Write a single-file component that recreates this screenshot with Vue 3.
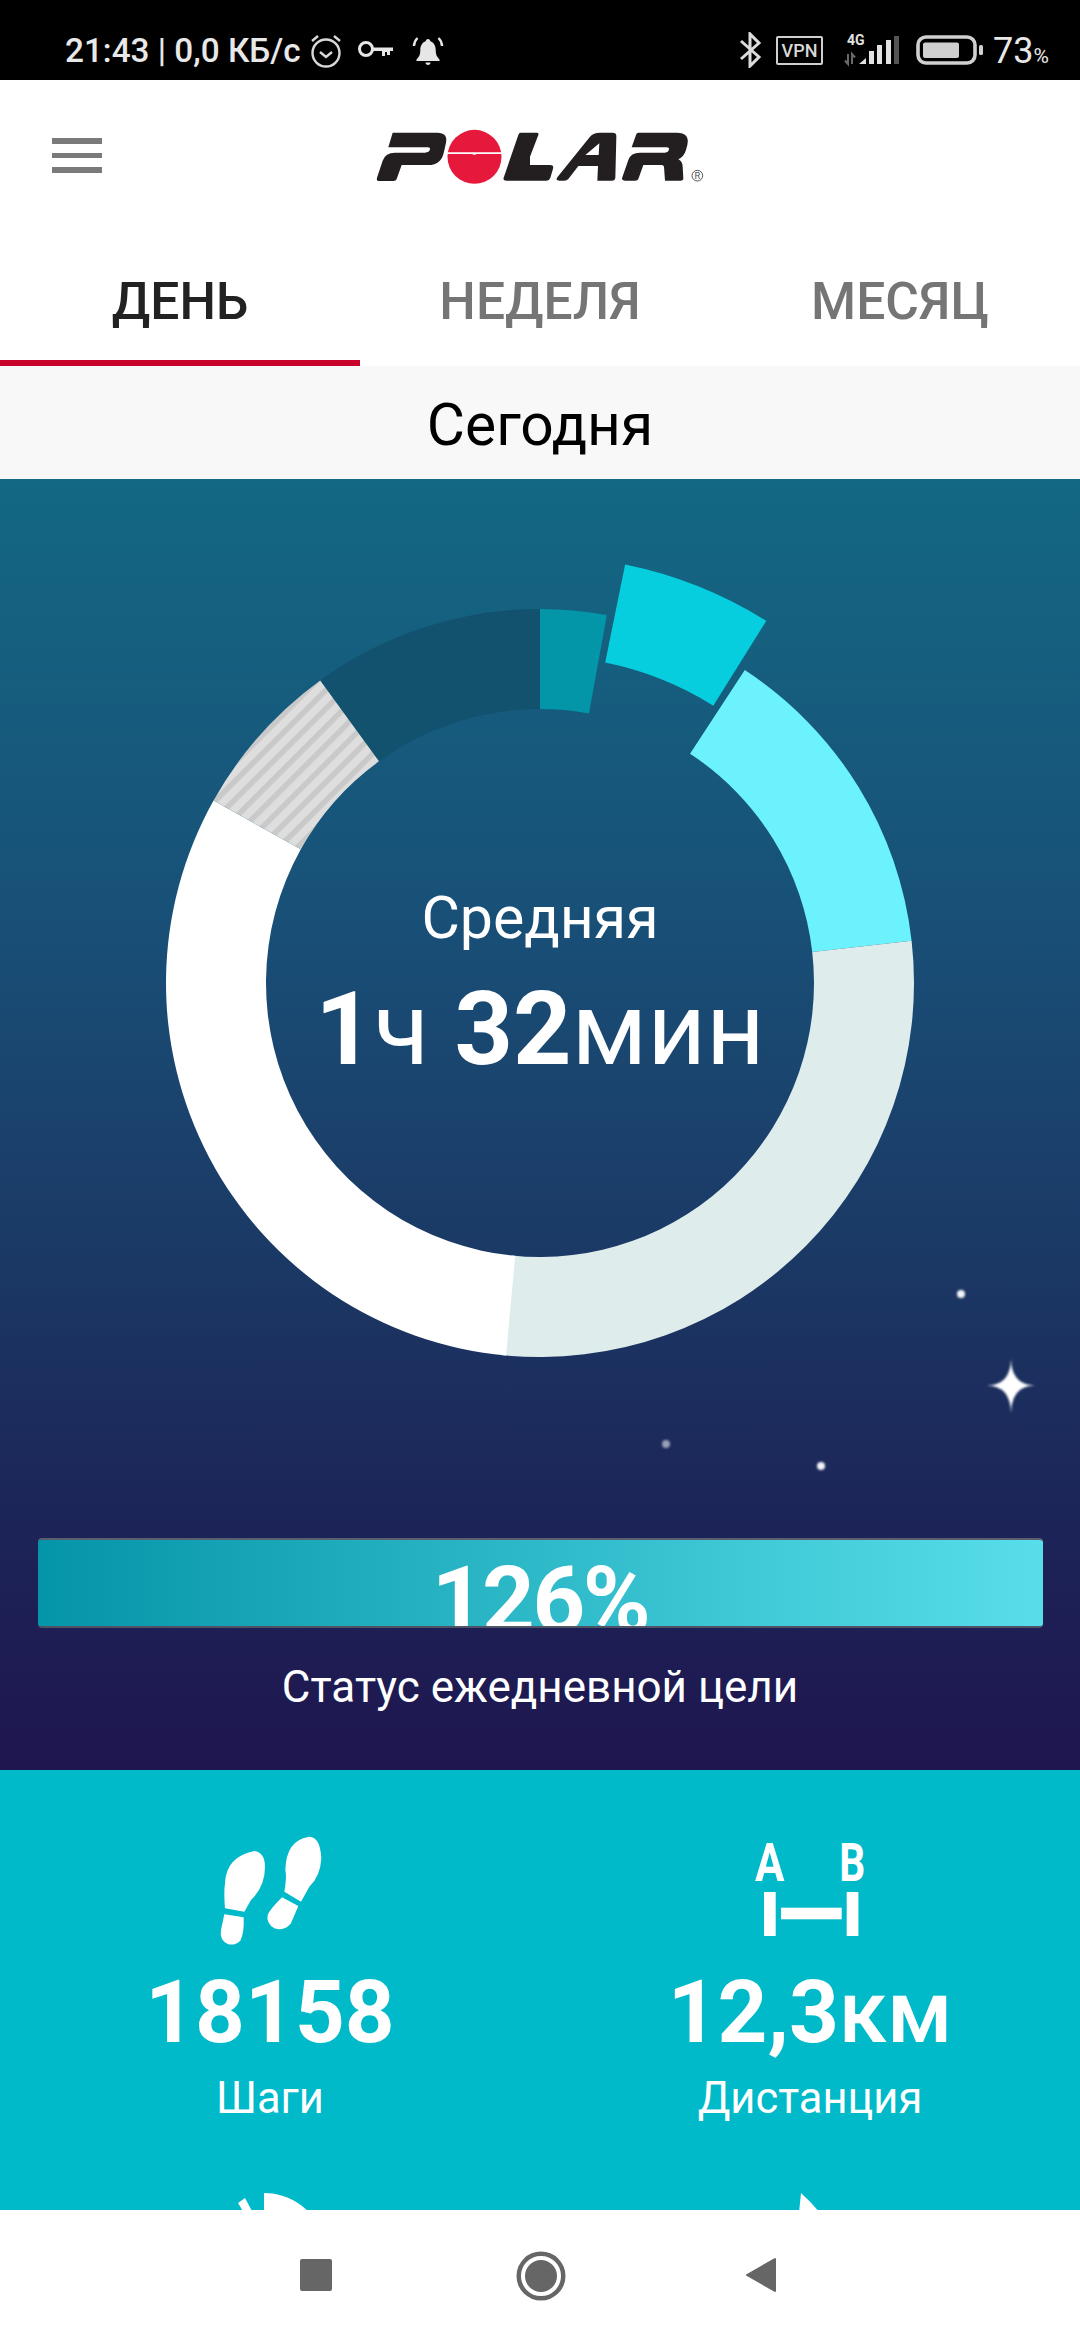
<script setup>
const cx = 540
const cy = 504

function pt(r, a) {
  const t = (a * Math.PI) / 180
  return `${(cx + r * Math.sin(t)).toFixed(2)},${(cy - r * Math.cos(t)).toFixed(2)}`
}
function arc(ri, ro, a0, a1) {
  const large = a1 - a0 > 180 ? 1 : 0
  return `M${pt(ro, a0)} A${ro},${ro} 0 ${large} 1 ${pt(ro, a1)} L${pt(ri, a1)} A${ri},${ri} 0 ${large} 0 ${pt(ri, a0)} Z`
}

const segments = [
  { d: arc(274, 374, -36, 0), fill: '#12526f' },
  { d: arc(274, 374, 0, 10.3), fill: '#0395a8' },
  { d: arc(327, 427, 11.5, 32), fill: '#06cede' },
  { d: arc(274, 374, 33.2, 83.5), fill: '#6cf2fd' },
  { d: arc(274, 374, 83.5, 186), fill: '#deecec' },
  { d: arc(274, 374, 185.2, 299.2), fill: '#ffffff' },
  { d: arc(274, 374, 299.2, 324), fill: 'url(#hatch)' }
]
const dots = [
  { x: 961, y: 815, o: 0.95 },
  { x: 666, y: 965, o: 0.55 },
  { x: 821, y: 987, o: 0.95 }
]
</script>

<template>
  <div class="phone">
    <div class="status">
      <span class="clock-text">21:43 | 0,0 КБ/с</span>
      <svg class="st-clock" width="32" height="36" viewBox="0 0 32 36">
        <circle cx="16" cy="20" r="13.5" fill="none" stroke="#d8d8d8" stroke-width="2.4" />
        <path d="M10 19l6 5 6-5" fill="none" stroke="#d8d8d8" stroke-width="2.4" />
        <path d="M2 8l6-5M30 8l-6-5" fill="none" stroke="#d8d8d8" stroke-width="2.4" />
      </svg>
      <svg class="st-key" width="38" height="20" viewBox="0 0 38 20">
        <circle cx="9" cy="9" r="6.5" fill="none" stroke="#e6e6e6" stroke-width="3" />
        <path d="M15 7.5h21v3.5h-3v4h-3v-3h-2v4h-3v-5H15z" fill="#e6e6e6" />
      </svg>
      <svg class="st-bell" width="32" height="32" viewBox="0 0 32 32">
        <path d="M16 4c1.5 0 2.2 1 2.3 2.2C22 7.500 23.700 11 23.700 15c0 4 .8 6.500 3.800 9.500v1.500h-23v-1.500c3-3 3.800-5.500 3.800-9.500 0-4 1.700-7.500 5.400-8.800C13.800 5 14.500 4 16 4z" fill="#e6e6e6" />
        <path d="M13.500 27.500h5c0 1.500-1 2.500-2.500 2.500s-2.500-1-2.500-2.500z" fill="#e6e6e6" />
        <path d="M2 11c0-3 1.500-6 3.500-8M30 11c0-3-1.500-6-3.500-8" fill="none" stroke="#e6e6e6" stroke-width="2.400" />
      </svg>
      <div class="st-spacer"></div>
      <svg class="st-bt" width="24" height="36" viewBox="0 0 24 36">
        <path d="M3 9l18 16-9 9V2l9 9L3 27" fill="none" stroke="#dcdcdc" stroke-width="3" />
      </svg>
      <div class="st-vpn">VPN</div>
      <svg class="st-signal" width="58" height="34" viewBox="0 0 58 34">
        <text x="5" y="12" class="st-4g">4G</text>
        <path d="M6 21v10l-3-3.500M10 31V21l3 3.500" fill="none" stroke="#6a6a6a" stroke-width="2" />
        <path d="M17 31l7-6v6z" fill="#e2e2e2" />
        <rect x="27" y="18" width="5" height="13" fill="#e2e2e2" />
        <rect x="35" y="12" width="5" height="19" fill="#e2e2e2" />
        <rect x="44" y="7" width="5" height="24" fill="#e2e2e2" />
        <rect x="52" y="3" width="5" height="28" fill="#555" />
      </svg>
      <svg class="st-batt" width="68" height="30" viewBox="0 0 68 30">
        <rect x="2" y="2" width="57" height="26" rx="8" fill="none" stroke="#d0d0d0" stroke-width="3.600" />
        <rect x="7" y="7.500" width="36" height="15.500" rx="2" fill="#cfcfcf" />
        <rect x="63" y="10" width="4" height="10" rx="1.500" fill="#d0d0d0" />
      </svg>
      <span class="st-pct">73<small>%</small></span>
    </div>

    <header class="header">
      <div class="burger"><i></i><i></i><i></i></div>
      <svg class="logo" width="360" height="90" viewBox="0 0 1080 270">
        <g fill="#231f20">
          <path d="M98,68 H232 Q264,68 258,98 L252,125 Q244,165 205,165 H125 L110,207 Q108,213 100,213 H58 Q48,213 51,203 L68,152 Q76,128 105,128 H195 Q208,128 210,118 Q211,112 203,112 H85 Z" />
          <path d="M482,68 H530 Q537,68 535,75 L510,140 V165 H570 Q582,165 579,176 L571,203 Q568,212 558,212 H440 Q428,212 431,203 L475,75 Q477,68 482,68 Z" />
          <path fill-rule="evenodd" d="M720,68 H758 Q770,68 769,80 L766,203 Q765,212 756,212 H712 L714,168 H655 L625,207 Q621,212 612,212 H598 Q585,212 592,202 L690,80 Q700,68 720,68 Z M676,135 H716 L718,100 Z" />
          <path d="M835,68 H950 Q990,68 982,105 L978,120 Q972,140 955,148 Q968,155 968,170 L970,205 Q970,212 962,212 H915 L912,170 Q911,165 905,165 H850 L835,207 Q833,212 825,212 H795 Q783,212 787,202 L805,150 Q812,128 840,128 H915 Q925,128 927,118 Q928,112 920,112 H815 L828,75 Q830,68 835,68 Z" />
        </g>
        <circle cx="343.500" cy="140.500" r="81" fill="#e6193c" />
        <path d="M258,127 H428 V132 H350 L343,135 L336,132 H258 Z" fill="#fff" />
        <circle cx="1012" cy="197" r="16" fill="none" stroke="#555" stroke-width="3" />
        <text x="1012" y="207" text-anchor="middle" class="reg">R</text>
      </svg>
    </header>

    <nav class="tabs">
      <div class="tab active">ДЕНЬ</div>
      <div class="tab">НЕДЕЛЯ</div>
      <div class="tab">МЕСЯЦ</div>
    </nav>

    <div class="today">Сегодня</div>

    <main class="main">
      <section class="hero">
        <div class="donut">
          <svg width="1080" height="1031" viewBox="0 0 1080 1031">
            <defs>
              <pattern id="hatch" width="13" height="13" patternUnits="userSpaceOnUse" patternTransform="rotate(45)">
                <rect width="13" height="13" fill="#dedede" />
                <rect width="5.500" height="13" fill="#c9c9c9" />
              </pattern>
              <filter id="soft" x="-30%" y="-30%" width="160%" height="160%">
                <feGaussianBlur stdDeviation="0.8" />
              </filter>
            </defs>
            <path v-for="(s, i) in segments" :key="i" :d="s.d" :fill="s.fill" />
            <circle v-for="(d, i) in dots" :key="'d' + i" :cx="d.x" :cy="d.y" r="4" fill="#fff" :opacity="d.o" filter="url(#soft)" />
            <path d="M1011,880 Q1011.500,906 1035,906.500 Q1011.500,907 1011,934 Q1010.500,907 987,906.500 Q1010.500,906 1011,880 Z" fill="#fff" filter="url(#soft)" />
          </svg>
          <div class="center">
            <div class="center-label">Средняя</div>
            <div class="center-value"><b>1</b>ч <b>32</b>мин</div>
          </div>
        </div>
        <div class="bar"><span>126%</span></div>
        <div class="bar-label">Статус ежедневной цели</div>
      </section>

      <section class="stats">
        <div class="stat">
          <svg class="foot" width="130" height="130" viewBox="0 0 390 390">
            <g fill="#fff">
              <path d="M160,93 Q192,98 192,140 Q192,200 150,240 L130,275 L72,265 Q68,220 72,190 Q75,110 160,93 Z" />
              <path d="M70,283 L128,292 Q130,340 118,362 Q100,378 80,372 Q55,360 60,330 Z" />
              <path d="M325,50 Q358,52 361,115 Q358,170 325,200 L300,245 L250,215 Q258,170 253,150 Q255,60 325,50 Z" />
              <path d="M243,232 L292,258 L270,310 Q250,335 220,325 Q195,310 200,285 Q205,270 243,232 Z" />
            </g>
          </svg>
          <div class="stat-value"><b>18158</b></div>
          <div class="stat-label">Шаги</div>
        </div>
        <div class="stat">
          <svg width="130" height="130" viewBox="0 0 130 130">
            <text class="ab" x="10" y="60.700" textLength="29.500" lengthAdjust="spacingAndGlyphs">A</text>
            <text class="ab" x="94.300" y="60.700" textLength="26" lengthAdjust="spacingAndGlyphs">B</text>
            <g fill="#fff">
              <rect x="19" y="72" width="11.700" height="44" />
              <rect x="101.700" y="72" width="11.700" height="44" />
              <rect x="36" y="87.700" width="60.700" height="11.600" />
            </g>
          </svg>
          <div class="stat-value"><b>12,3</b><span>км</span></div>
          <div class="stat-label">Дистанция</div>
        </div>
        <div class="stat stat-next">
          <svg width="80" height="20" viewBox="0 0 80 20">
            <path d="M8,10 L15,5 L23,20 H14 Z" fill="#fff" />
            <path d="M34,0 Q60,0 80,20 H34 Z" fill="#fff" />
          </svg>
        </div>
        <div class="stat stat-next">
          <svg width="24" height="20" viewBox="0 0 24 20">
            <path d="M3,0 Q14,10 22,20 H1 Q2,10 3,0 Z" fill="#fff" />
          </svg>
        </div>
      </section>
    </main>

    <footer class="nav">
      <div class="nav-square"></div>
      <div class="nav-circle"></div>
      <svg width="32" height="38" viewBox="0 0 32 38" class="nav-back">
        <path d="M30 3v32l-28-16z" fill="#666" stroke="#666" stroke-width="2" stroke-linejoin="round" />
      </svg>
    </footer>
  </div>
</template>

<style scoped>
.phone {
  width: 1080px;
  height: 2340px;
  display: flex;
  flex-direction: column;
  overflow: hidden;
  background: #fff;
  font-family: Roboto, "Noto Sans", sans-serif;
}
.status {
  height: 80px;
  flex: none;
  background: #000;
  display: flex;
  align-items: center;
  padding: 20px 39px 0 65px;
  box-sizing: border-box;
  color: #e8e8e8;
}
.clock-text {
  font-size: 33.300px;
  font-weight: 500;
  white-space: nowrap;
  width: 245px;
}
.st-clock { margin-top: 2px; }
.st-key { margin-left: 15px; }
.st-bell { margin-left: 17px; margin-top: 2px; }
.st-spacer { flex: 1; }
.st-bt { margin-right: 14px; }
.st-vpn {
  width: 47px;
  height: 29px;
  box-sizing: border-box;
  border: 2px solid #cfcfcf;
  border-radius: 2px;
  font-size: 18px;
  font-weight: 500;
  line-height: 25px;
  text-align: center;
  color: #d8d8d8;
  margin-right: 19px;
}
.st-signal { margin-right: 16px; }
.st-4g { font-size: 14px; font-weight: 700; fill: #e2e2e2; font-family: Roboto, sans-serif; }
.st-pct { font-size: 36px; margin-left: 9px; width: 48px; white-space: nowrap; margin-top: 2px; }
.st-pct small { font-size: 21px; }

.header {
  height: 155px;
  flex: none;
  display: flex;
  align-items: flex-start;
}
.burger {
  width: 50px;
  margin: 58px 0 0 52px;
  display: flex;
  flex-direction: column;
  gap: 9px;
}
.burger i {
  display: block;
  height: 5.500px;
  background: #7a7a7a;
}
.logo { margin: 30px 0 0 258px; }
.reg { font-size: 28px; fill: #555; font-family: Roboto, sans-serif; }

.tabs {
  height: 131px;
  flex: none;
  display: grid;
  grid-template-columns: repeat(3, 360px);
}
.tab {
  height: 131px;
  font-size: 51.500px;
  font-weight: 500;
  color: #757575;
  text-align: center;
  line-height: 134px;
  box-sizing: border-box;
}
.tab.active {
  color: #222;
  border-bottom: 6px solid #c8042c;
}
.today {
  height: 113px;
  flex: none;
  background: #f8f8f8;
  color: #000;
  font-size: 58.700px;
  line-height: 118px;
  text-align: center;
  overflow: hidden;
}
.main {
  flex: 1;
  min-height: 0;
  overflow: hidden;
}
.hero {
  height: 1291px;
  background: linear-gradient(180deg, #136883 0%, #185279 31%, #1b3a66 59%, #1c2658 79%, #1f164f 100%);
  display: flex;
  flex-direction: column;
  align-items: center;
}
.donut {
  position: relative;
  width: 1080px;
  height: 1031px;
  flex: none;
}
.donut svg { display: block; }
.center {
  position: absolute;
  left: 0;
  right: 0;
  top: 404px;
  text-align: center;
  color: #fff;
}
.center-label {
  font-size: 59px;
  line-height: 70px;
}
.center-value {
  font-size: 102px;
  line-height: 120px;
  margin-top: 16px;
  white-space: nowrap;
}
.center-value b, .stat-value b { font-weight: 700; }
.bar {
  width: 1005px;
  height: 90px;
  margin-top: 28px;
  flex: none;
  box-sizing: border-box;
  border-top: 2px solid #5a5f70;
  border-bottom: 2px solid #4e5366;
  border-radius: 4px;
  background: linear-gradient(90deg, #0595a8 0%, #58deea 100%);
  overflow: hidden;
  color: #fff;
  text-align: center;
  font-size: 92px;
  letter-spacing: -2.500px;
  font-weight: 700;
  line-height: 122px;
}
.bar-label {
  font-size: 44px;
  color: #fff;
  line-height: 50px;
  margin-top: 34px;
}
.stats {
  display: grid;
  grid-template-columns: 540px 540px;
  grid-template-rows: 423px 77px;
  background: #00b9c9;
  height: 500px;
}
.stat {
  display: flex;
  flex-direction: column;
  align-items: center;
  color: #fff;
  padding-top: 50px;
}
.stat svg { display: block; }
.foot { margin-right: 9px; }
.ab { font-size: 53px; font-weight: 700; fill: #fff; font-family: Roboto, sans-serif; }
.stat-value {
  font-size: 87px;
  line-height: 100px;
  margin-top: 12px;
  white-space: nowrap;
}
.stat-value span { font-weight: 500; line-height: 0; }
.stat-label {
  font-size: 43.500px;
  line-height: 50px;
  margin-top: 12px;
}
.stat-next { padding-top: 0; }
.nav {
  height: 130px;
  flex: none;
  background: #fff;
  position: relative;
}
.nav-square {
  width: 32px;
  height: 32px;
  border-radius: 2px;
  background: #666;
  position: absolute;
  left: 300px;
  top: 49px;
}
.nav-circle {
  width: 32px;
  height: 32px;
  border-radius: 50%;
  background: #666;
  border: 4px solid #fff;
  box-shadow: 0 0 0 4.500px #666;
  position: absolute;
  left: 520.500px;
  top: 45.500px;
}
.nav-back {
  position: absolute;
  left: 745px;
  top: 46px;
}
</style>
